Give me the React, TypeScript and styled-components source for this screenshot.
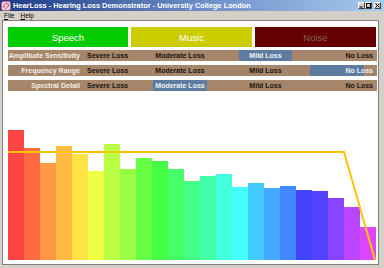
import React from "react";
import styled, { createGlobalStyle } from "styled-components";

const Global = createGlobalStyle`
  html, body { margin: 0; padding: 0; background: #d4d0c8; }
  body { font-family: "Liberation Sans", Arial, sans-serif; }
`;

const Window = styled.div`
  width: 384px;
  height: 268px;
  background: #d4d0c8;
  display: flex;
  flex-direction: column;
  overflow: hidden;
`;

const TitleBar = styled.div`
  height: 11px;
  background: linear-gradient(90deg, #1c3a86 0%, #6a8ac4 50%, #a6caf0 100%);
  display: flex;
  align-items: center;
  padding-left: 1px;
  padding-right: 3px;
  gap: 2px;
`;

const TitleText = styled.span`
  color: #ffffff;
  font-size: 7.4px;
  font-weight: bold;
  white-space: nowrap;
  flex: 1;
  line-height: 11px;
`;

const TitleButtons = styled.div`
  display: flex;
  align-items: center;
`;

const TitleButton = styled.div<{ $gap?: number }>`
  width: 7px;
  height: 7px;
  box-sizing: border-box;
  background: #d4d0c8;
  border-top: 1px solid #ffffff;
  border-left: 1px solid #ffffff;
  border-right: 1px solid #404040;
  border-bottom: 1px solid #404040;
  margin-left: ${(p) => p.$gap ?? 0}px;
  display: flex;
  align-items: center;
  justify-content: center;
`;

const MenuBar = styled.div`
  height: 8px;
  display: flex;
  align-items: center;
  padding-left: 4px;
  padding-top: 1px;
  gap: 6px;
`;

const MenuItem = styled.span`
  font-size: 6.5px;
  color: #000;
  line-height: 8px;
  & u { text-decoration: underline; }
`;

const Client = styled.div`
  margin: 0 5px 3px 2px;
  flex: 1;
  background: #ffffff;
  border: 1px solid #808080;
  padding: 6px 1px 3px 5px;
  display: flex;
  flex-direction: column;
`;

const ModeRow = styled.div`
  display: grid;
  grid-template-columns: 120px 121px 121px;
  column-gap: 3px;
  height: 20px;
  margin-bottom: 3px;
`;

const ModeButton = styled.div<{ $bg: string; $fg: string }>`
  background: ${(p) => p.$bg};
  color: ${(p) => p.$fg};
  display: flex;
  align-items: center;
  justify-content: center;
  font-size: 9.5px;
  font-weight: normal;
`;

const Settings = styled.div`
  display: flex;
  flex-direction: column;
  gap: 4px;
`;

const SettingRow = styled.div`
  display: grid;
  grid-template-columns: 76px 69px 54px 32px 53px 18px 1fr;
  height: 11px;
  background: #a5866a;
  font-size: 7px;
  font-weight: bold;
  line-height: 11px;
  white-space: nowrap;
`;

const RowLabel = styled.div`
  grid-column: 1;
  text-align: right;
  padding-right: 4px;
  color: #f4eee8;
`;

const Option = styled.div<{
  $col: number;
  $align: "left" | "center" | "right";
  $on: boolean;
  $hlw?: number;
}>`
  grid-column: ${(p) => p.$col};
  text-align: ${(p) => p.$align};
  padding-left: ${(p) => (p.$align === "left" ? 3 : 0)}px;
  padding-right: ${(p) => (p.$align === "right" ? 4 : 0)}px;
  color: ${(p) => (p.$on ? "#eef2f6" : "#1a1410")};
  background: ${(p) =>
    p.$on
      ? `linear-gradient(#5e7ca0, #5e7ca0) no-repeat left top / ${p.$hlw ? p.$hlw + "px" : "100%"} 100%`
      : "transparent"};
`;

const Chart = styled.svg`
  display: block;
  margin-top: 4px;
`;

const levels = ["Severe Loss", "Moderate Loss", "Mild Loss", "No Loss"];
const optionLayout: { col: number; align: "left" | "center" | "right"; hlw?: number }[] = [
  { col: 2, align: "left" },
  { col: 3, align: "center" },
  { col: 5, align: "center" },
  { col: 7, align: "right", hlw: 54 },
];

const rows = [
  { label: "Amplitude Sensitivity", sel: 2 },
  { label: "Frequency Range", sel: 3 },
  { label: "Spectral Detail", sel: 1 },
];

const bars: [number, string][] = [
  [130, "#ff4444"],
  [148, "#ff6a40"],
  [163, "#ff9944"],
  [146, "#ffbb44"],
  [154, "#ffe244"],
  [171, "#eeff44"],
  [144, "#bbff44"],
  [169, "#99ff44"],
  [158, "#66ff44"],
  [161, "#44ff44"],
  [169, "#44ff66"],
  [181, "#44ff88"],
  [176, "#44ffaa"],
  [174, "#44ffdd"],
  [187, "#44ffff"],
  [183, "#44ccff"],
  [188, "#44aaff"],
  [186, "#4488ff"],
  [190, "#4444ff"],
  [191, "#5544ff"],
  [198, "#8844ff"],
  [207, "#bb44ff"],
  [227, "#dd44ff"],
];

const CHART_TOP = 95;
const CHART_H = 165;

export default function App() {
  return (
    <>
      <Global />
      <Window>
        <TitleBar>
          <svg width="10" height="10" viewBox="0 0 10 10">
            <rect x="0.5" y="0.5" width="9" height="9" rx="2" fill="#f4d4dc" stroke="#c06080" />
            <path d="M3 7 C2 4 4 2 6 2.5 C8 3 8 5 6.5 6 C5.5 6.7 5.5 8 4 8" fill="none" stroke="#c04060" strokeWidth="1" />
          </svg>
          <TitleText>HearLoss - Hearing Loss Demonstrator - University College London</TitleText>
          <TitleButtons>
            <TitleButton>
              <svg width="5" height="5" viewBox="0 0 5 5"><rect x="0.5" y="3.5" width="3" height="1" fill="#000" /></svg>
            </TitleButton>
            <TitleButton>
              <svg width="5" height="5" viewBox="0 0 5 5"><rect x="0.5" y="0.5" width="4" height="4" fill="none" stroke="#000" strokeWidth="1" /></svg>
            </TitleButton>
            <TitleButton $gap={2}>
              <svg width="5" height="5" viewBox="0 0 5 5"><path d="M0.5 0.5 L4.5 4.5 M4.5 0.5 L0.5 4.5" stroke="#000" strokeWidth="1" /></svg>
            </TitleButton>
          </TitleButtons>
        </TitleBar>
        <MenuBar>
          <MenuItem><u>F</u>ile</MenuItem>
          <MenuItem><u>H</u>elp</MenuItem>
        </MenuBar>
        <Client>
          <ModeRow>
            <ModeButton $bg="#00cc00" $fg="#ffffff">Speech</ModeButton>
            <ModeButton $bg="#cccc00" $fg="#ffffff">Music</ModeButton>
            <ModeButton $bg="#660000" $fg="#8a6262">Noise</ModeButton>
          </ModeRow>
          <Settings>
            {rows.map((r) => (
              <SettingRow key={r.label}>
                <RowLabel>{r.label}</RowLabel>
                {levels.map((lv, i) => (
                  <Option
                    key={lv}
                    $col={optionLayout[i].col}
                    $align={optionLayout[i].align}
                    $hlw={optionLayout[i].hlw}
                    $on={r.sel === i}
                  >
                    {lv}
                  </Option>
                ))}
              </SettingRow>
            ))}
          </Settings>
          <Chart width={368} height={CHART_H} viewBox={`0 0 368 ${CHART_H}`}>
            {bars.map(([top, color], i) => (
              <rect
                key={i}
                x={i * 16}
                y={top - CHART_TOP}
                width={16}
                height={CHART_H - (top - CHART_TOP)}
                fill={color}
              />
            ))}
            <polyline
              points={`0,57 336,57 367,165`}
              fill="none"
              stroke="#ffc400"
              strokeWidth={2}
            />
          </Chart>
        </Client>
      </Window>
    </>
  );
}
